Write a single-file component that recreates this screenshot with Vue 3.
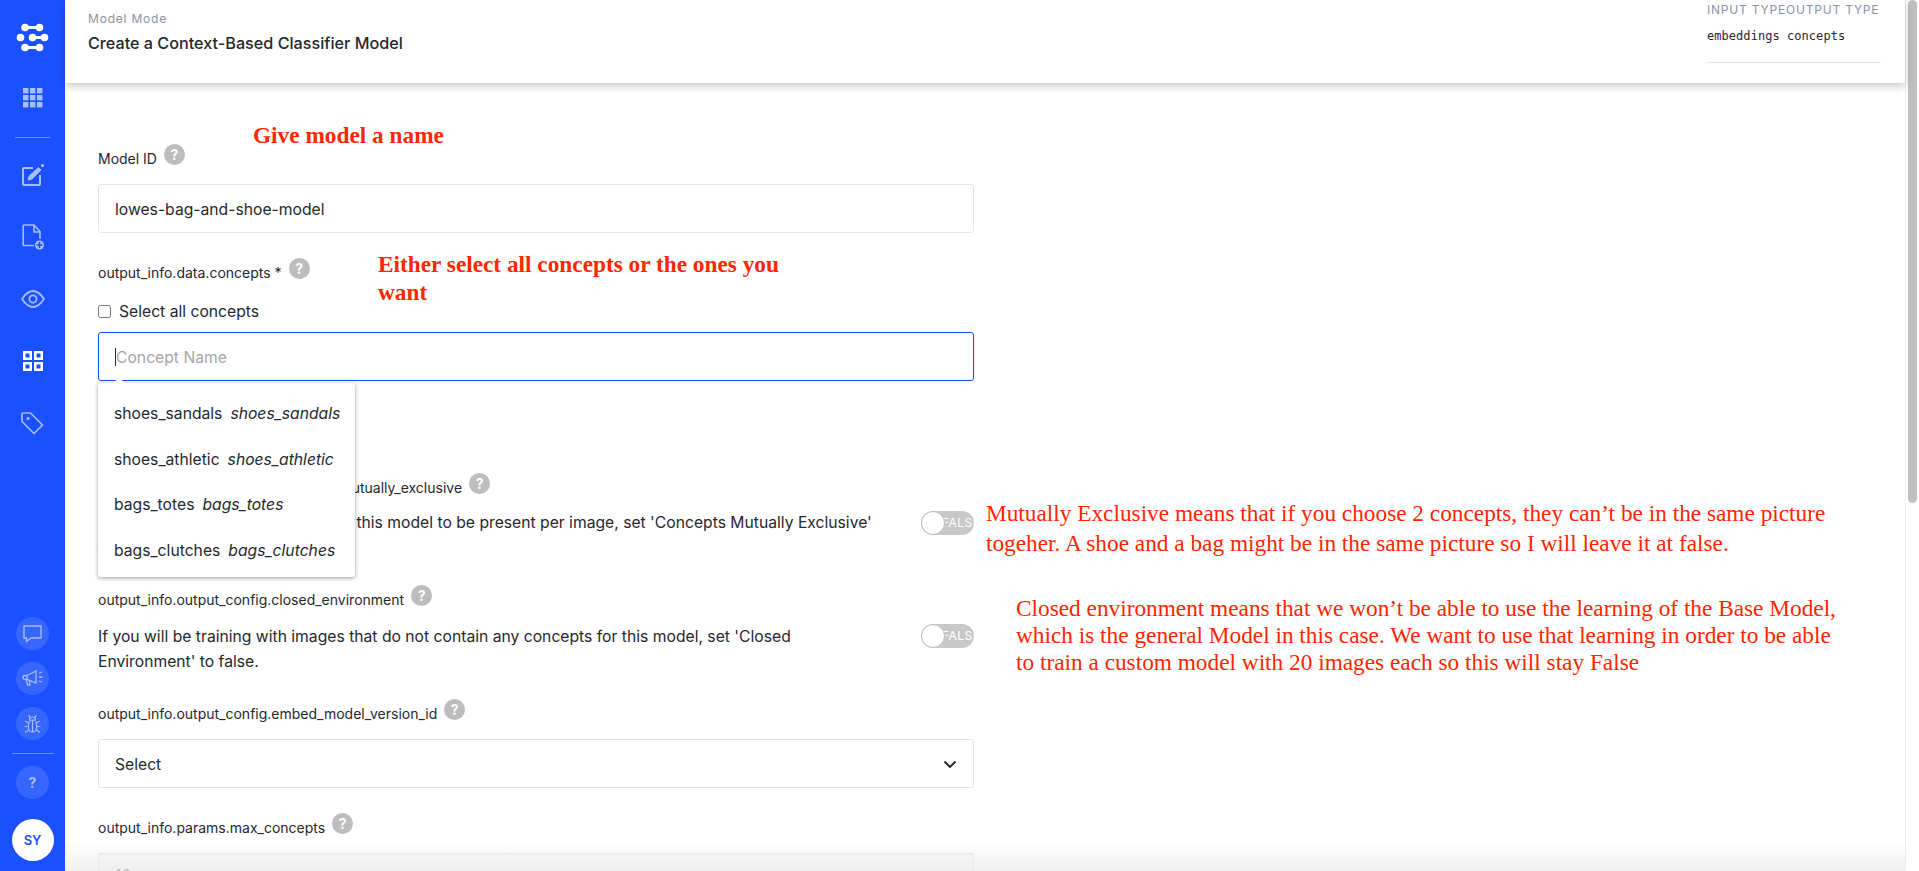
<template>
  <div class="page">
    <aside class="sidebar">
      <div class="logo">
        <svg width="34" height="32" viewBox="0 0 34 32" fill="#fff" stroke="#fff" stroke-linecap="round">
          <path d="M9 5.500 H23.500" stroke-width="3" />
          <circle cx="9" cy="5.500" r="3.800" stroke="none" />
          <circle cx="23.500" cy="5.500" r="3.800" stroke="none" />
          <circle cx="4.500" cy="15.500" r="3.800" stroke="none" />
          <path d="M16.500 15.500 H28.500" stroke-width="3" />
          <circle cx="16.500" cy="15.500" r="3.800" stroke="none" />
          <circle cx="28.500" cy="15.500" r="3.800" stroke="none" />
          <path d="M9 25.500 H23.500" stroke-width="3" />
          <circle cx="9" cy="25.500" r="3.800" stroke="none" />
          <circle cx="23.500" cy="25.500" r="3.800" stroke="none" />
        </svg>
      </div>
      <div class="grid-slot">
        <svg width="20" height="20" viewBox="0 0 20 20" fill="#a6bdff">
          <template v-for="y in [0, 7, 14]" :key="y">
            <rect v-for="x in [0, 7, 14]" :key="x" :x="x" :y="y" width="5.400" height="5.400" />
          </template>
        </svg>
      </div>
      <div class="rule rule-top"></div>
      <div class="nav-slot">
        <svg width="24" height="24" viewBox="0 0 24 24" fill="none" stroke="#a6bdff" stroke-width="2">
          <path d="M12 5 H3 a1 1 0 0 0 -1 1 V21 a1 1 0 0 0 1 1 H18 a1 1 0 0 0 1 -1 V12" />
          <path d="M7 17 L8.200 13 L17.500 4.500 L20 7 L11 16 Z" fill="#a6bdff" stroke-width="1" />
          <circle cx="21.500" cy="2.500" r="1.600" fill="#a6bdff" stroke="none" />
        </svg>
      </div>
      <div class="nav-slot">
        <svg width="24" height="26" viewBox="0 0 24 26" fill="none" stroke="#a6bdff" stroke-width="1.600">
          <path d="M13 21.500 H3 a0.800 0.800 0 0 1 -0.800 -0.800 V1.800 a0.800 0.800 0 0 1 0.800 -0.800 H13 L19 7.500 V15" />
          <path d="M13 1 V8 H19" />
          <circle cx="18.500" cy="21" r="4.500" fill="#a6bdff" stroke="none" />
          <path d="M18.500 18 V24 M15.500 21 H21.500" stroke="#1a50ff" stroke-width="1.500" />
        </svg>
      </div>
      <div class="nav-slot">
        <svg width="24" height="18" viewBox="0 0 24 18" fill="none" stroke="#a6bdff" stroke-width="1.800">
          <path d="M1 9 C5 3 8.500 1 12 1 C15.500 1 19 3 23 9 C19 15 15.500 17 12 17 C8.500 17 5 15 1 9 Z" />
          <circle cx="12" cy="9" r="3.600" />
        </svg>
      </div>
      <div class="nav-slot">
        <svg width="20" height="20" viewBox="0 0 20 20" fill="none" stroke="#fff" stroke-width="2.500">
          <rect x="1.250" y="1.250" width="6.500" height="6.500" />
          <rect x="12.250" y="1.250" width="6.500" height="6.500" />
          <rect x="1.250" y="12.250" width="6.500" height="6.500" />
          <rect x="12.250" y="12.250" width="6.500" height="6.500" />
        </svg>
      </div>
      <div class="nav-slot">
        <svg width="23" height="23" viewBox="0 0 23 23" fill="none" stroke="#a6bdff" stroke-width="1.700">
          <path d="M2 1 H9.500 L21.500 13 L13 21.500 L1 9.500 V2 a1 1 0 0 1 1 -1 Z" stroke-linejoin="round" />
          <circle cx="7" cy="6.500" r="1.500" fill="#a6bdff" stroke="none" />
        </svg>
      </div>

      <div class="side-bottom">
        <div class="round">
          <svg width="19" height="18" viewBox="0 0 19 18" fill="none" stroke="#a6bdff" stroke-width="1.300">
            <path d="M1 1 H18 V13 H8 L3.500 16.500 V13 H1 Z" />
          </svg>
        </div>
        <div class="round">
          <svg width="21" height="18" viewBox="0 0 21 18" fill="none" stroke="#a6bdff" stroke-width="1.300">
            <path d="M5 5.500 L14 1 V13 L5 9.500 H3 a2 2 0 0 1 0 -4 Z" />
            <path d="M5 5.500 V9.500 M4.500 10 L5.500 15 H8 L7.500 11" />
            <path d="M17 3 L20 2 M17 7 H20.500 M17 11 L20 12" />
          </svg>
        </div>
        <div class="round">
          <svg width="17" height="20" viewBox="0 0 17 20" fill="none" stroke="#a6bdff" stroke-width="1.200">
            <rect x="4.500" y="6" width="8" height="12" rx="4" />
            <path d="M5.500 6 a3 3 0 0 1 6 0 M4.500 1 L6 3.500 M12.500 1 L11 3.500" />
            <path d="M4.500 9 L1 7 M12.500 9 L16 7 M4.500 12.500 H0.500 M12.500 12.500 H16.500 M4.500 16 L1 18.500 M12.500 16 L16 18.500 M8.500 6 V18" />
          </svg>
        </div>
        <div class="rule rule-bottom"></div>
        <div class="round round-help">?</div>
        <div class="avatar">SY</div>
      </div>
    </aside>

    <main class="main">
      <header class="topbar">
        <div class="titles">
          <div class="mode">Model Mode</div>
          <div class="title">Create a Context-Based Classifier Model</div>
        </div>
        <div class="types">
          <div class="types-head">INPUT TYPEOUTPUT TYPE</div>
          <div class="types-value">embeddings concepts</div>
        </div>
      </header>

      <section class="content">
        <div class="form">
          <div class="label label-first">Model ID <span class="help">?</span></div>
          <div class="box">lowes-bag-and-shoe-model</div>

          <div class="label">output_info.data.concepts * <span class="help">?</span></div>
          <label class="check"><input type="checkbox" /> Select all concepts</label>
          <div class="concept-wrap">
            <div class="box box-focus"><span class="caret"></span><span class="placeholder">Concept Name</span></div>
            <div class="dropdown">
              <div v-for="c in concepts" :key="c" class="option">
                {{ c }}<em>{{ c }}</em>
              </div>
            </div>
          </div>

          <div class="label label-mutual">output_info.output_config.concepts_mutually_exclusive <span class="help">?</span></div>
          <div class="switch-row switch-mutual">
            <p>If you only want one concept from this model to be present per image, set 'Concepts Mutually Exclusive' to true.</p>
            <div class="toggle"><span class="toggle-text">FALSE</span><span class="knob"></span></div>
          </div>

          <div class="label">output_info.output_config.closed_environment <span class="help">?</span></div>
          <div class="switch-row">
            <p>If you will be training with images that do not contain any concepts for this model, set 'Closed Environment' to false.</p>
            <div class="toggle"><span class="toggle-text">FALSE</span><span class="knob"></span></div>
          </div>

          <div class="label">output_info.output_config.embed_model_version_id <span class="help">?</span></div>
          <div class="box box-select">
            Select
            <svg width="14" height="9" viewBox="0 0 14 9" fill="none" stroke="#1c1f24" stroke-width="1.800">
              <path d="M1.500 1.500 L7 7 L12.500 1.500" />
            </svg>
          </div>

          <div class="label">output_info.params.max_concepts <span class="help">?</span></div>
          <div class="box box-muted">10</div>
        </div>

        <div class="note note-bold note-name">Give model a name</div>
        <div class="note note-bold note-concepts">Either select all concepts or the ones you<br />want</div>
        <div class="note note-mutual">Mutually Exclusive means that if you choose 2 concepts, they can’t be in the same picture<br />togeher. A shoe and a bag might be in the same picture so I will leave it at false.</div>
        <div class="note note-closed">Closed environment means that we won’t be able to use the learning of the Base Model,<br />which is the general Model in this case. We want to use that learning in order to be able<br />to train a custom model with 20 images each so this will stay False</div>
      </section>
      <div class="fade"></div>
    </main>

    <div class="scrollbar"><div class="thumb"></div></div>
  </div>
</template>

<script setup>
const concepts = ['shoes_sandals', 'shoes_athletic', 'bags_totes', 'bags_clutches']
</script>

<style>
html, body {
  margin: 0;
  background: #fff;
}
</style>

<style scoped>
.page {
  display: flex;
  width: 1919px;
  height: 871px;
  overflow: hidden;
  font-family: Inter, "Liberation Sans", sans-serif;
  color: #25282d;
}

.sidebar {
  flex: 0 0 65px;
  display: flex;
  flex-direction: column;
  align-items: center;
  background: #1a50ff;
}
.logo {
  height: 74px;
  display: flex;
  align-items: center;
  justify-content: center;
  padding-top: 1px;
  box-sizing: border-box;
}
.grid-slot {
  height: 48px;
  display: flex;
  align-items: center;
}
.nav-slot {
  height: 62px;
  display: flex;
  align-items: center;
  justify-content: center;
}
.rule {
  background: rgba(255, 255, 255, 0.35);
  height: 1px;
}
.rule-top {
  width: 35px;
  margin: 15px 0 6px;
}
.side-bottom {
  margin-top: auto;
  display: flex;
  flex-direction: column;
  align-items: center;
  padding-bottom: 10px;
}
.round {
  width: 33px;
  height: 33px;
  border-radius: 50%;
  background: rgba(255, 255, 255, 0.13);
  display: flex;
  align-items: center;
  justify-content: center;
  margin-bottom: 12px;
}
.rule-bottom {
  width: 42px;
  margin: 1px 0 12px;
}
.round-help {
  margin-bottom: 20px;
  color: #a6bdff;
  font-size: 14px;
  font-weight: 700;
}
.avatar {
  width: 42px;
  height: 42px;
  border-radius: 50%;
  background: #fff;
  color: #1a50ff;
  font-size: 13px;
  font-weight: 600;
  display: flex;
  align-items: center;
  justify-content: center;
}

.main {
  position: relative;
  flex: 1;
  min-width: 0;
  display: flex;
  flex-direction: column;
}
.topbar {
  position: relative;
  z-index: 2;
  flex: 0 0 83px;
  display: flex;
  justify-content: space-between;
  background: #fff;
  box-shadow: 0 3px 8px rgba(0, 0, 0, 0.22);
}
.titles {
  padding: 12px 0 0 23px;
}
.mode {
  font-size: 12px;
  line-height: 14px;
  letter-spacing: 0.8px;
  color: #8a93a3;
}
.title {
  margin-top: 7px;
  font-size: 16.200px;
  line-height: 20px;
  font-weight: 500;
  color: #25282d;
}
.types {
  width: 174px;
  height: 62px;
  margin-right: 24px;
  border-bottom: 1px solid #e3e5e8;
}
.types-head {
  font-size: 12px;
  line-height: 20px;
  letter-spacing: 0.8px;
  color: #8a93a3;
}
.types-value {
  margin-top: 6px;
  font-family: "DejaVu Sans Mono", monospace;
  font-size: 12px;
  line-height: 20px;
  letter-spacing: 0.05px;
  color: #25282d;
}

.content {
  position: relative;
  flex: 1;
  overflow: hidden;
}
.form {
  width: 876px;
  margin-left: 33px;
}
.label {
  height: 20px;
  margin-top: 30px;
  font-size: 14px;
  line-height: 20px;
  display: flex;
  align-items: center;
  gap: 3px;
  white-space: nowrap;
}
.label-first {
  margin-top: 66px;
}
.label-mutual {
  margin-top: 97px;
}
.help {
  width: 21px;
  height: 21px;
  border-radius: 50%;
  background: #bdbdbd;
  color: #fff;
  font-size: 14px;
  font-weight: 700;
  line-height: 21px;
  text-align: center;
  margin: -10px 0 0 4px;
}
.box {
  height: 49px;
  margin-top: 15px;
  padding: 1px 16px 0;
  box-sizing: border-box;
  display: flex;
  align-items: center;
  border: 1px solid #e4e6e8;
  border-radius: 3px;
  font-size: 15.700px;
  background: #fff;
}
.check {
  display: flex;
  align-items: center;
  height: 20px;
  margin-top: 18px;
  font-size: 15.700px;
  gap: 8px;
}
.check input {
  width: 13px;
  height: 13px;
  margin: 0;
}
.concept-wrap {
  position: relative;
  margin-top: 11px;
}
.box-focus {
  margin-top: 0;
  border: 1.500px solid #1a50ff;
  position: relative;
}
.caret {
  width: 1px;
  height: 18px;
  background: #25282d;
}
.placeholder {
  color: #a3a6ab;
}
.dropdown {
  position: absolute;
  z-index: 3;
  left: 0;
  top: 51px;
  width: 257px;
  height: 194px;
  padding: 8px 0 0;
  box-sizing: border-box;
  background: #fff;
  border-radius: 3px;
  box-shadow: 0 1px 4px rgba(0, 0, 0, 0.4);
}
.dropdown::before {
  content: "";
  position: absolute;
  top: -4px;
  left: 17px;
  width: 8px;
  height: 8px;
  background: #fff;
  transform: rotate(45deg);
}
.option {
  height: 45.500px;
  padding-left: 16px;
  display: flex;
  align-items: center;
  font-size: 15.700px;
  white-space: nowrap;
}
.option em {
  margin-left: 8px;
}
.switch-row {
  display: flex;
  justify-content: space-between;
  margin-top: 14px;
}
.switch-mutual {
  margin-top: 12px;
}
.switch-mutual .toggle {
  margin-top: 1px;
}
.switch-row p {
  width: 785px;
  margin: 0;
  font-size: 15.700px;
  line-height: 25px;
}
.toggle {
  position: relative;
  width: 53px;
  height: 24px;
  border-radius: 12px;
  background: #c8c8c8;
  overflow: hidden;
  flex: none;
}
.knob {
  position: absolute;
  left: 0;
  top: 0;
  width: 24px;
  height: 24px;
  box-sizing: border-box;
  border-radius: 50%;
  background: #fff;
  border: 1px solid #bbb;
}
.toggle-text {
  position: absolute;
  left: 21px;
  top: 0;
  line-height: 24px;
  font-size: 12px;
  letter-spacing: 0.5px;
  color: #fff;
  white-space: nowrap;
}
.box-select {
  justify-content: space-between;
}
.box-muted {
  padding: 0 16px 5px;
  background: #fafafa;
}
.fade {
  position: absolute;
  z-index: 4;
  left: 0;
  right: 0;
  bottom: 0;
  height: 30px;
  background: linear-gradient(rgba(240, 240, 240, 0), rgba(236, 236, 236, 0.8));
}

.note {
  position: absolute;
  font-family: "Liberation Serif", "Times New Roman", serif;
  color: #ff2600;
  font-size: 23.300px;
  white-space: nowrap;
}
.note-bold {
  font-weight: 700;
}
.note-name {
  left: 188px;
  top: 39px;
}
.note-concepts {
  left: 313px;
  top: 167px;
  line-height: 28px;
}
.note-mutual {
  left: 921px;
  top: 415px;
  line-height: 30px;
}
.note-closed {
  left: 951px;
  top: 512px;
  line-height: 27px;
}

.scrollbar {
  flex: 0 0 14px;
  border-left: 1px solid #ececec;
  box-sizing: border-box;
  background: #fff;
}
.thumb {
  width: 9px;
  height: 503px;
  margin-left: 2px;
  border-radius: 5px;
  background: #bfbfbf;
}
</style>
